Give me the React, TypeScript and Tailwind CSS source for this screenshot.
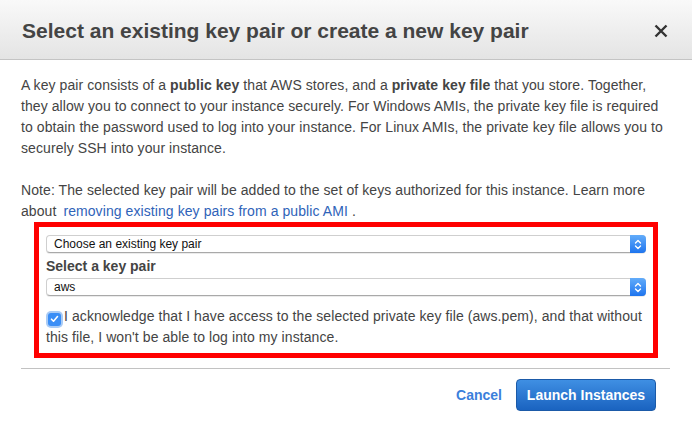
import React from "react";

function SelectBox({ label }: { label: string }) {
  return (
    <div className="flex h-[18px] items-stretch rounded-[4px] border border-[#cfcfcf] border-b-[#a9a9a9] bg-white shadow-[0_1px_0_rgba(0,0,0,0.08)]">
      <div className="flex flex-1 items-center pl-[7px] text-[12px] leading-none text-[#111]">{label}</div>
      <div className="-my-px -mr-px flex w-[16px] items-center justify-center rounded-r-[4px] bg-gradient-to-b from-[#62acfa] to-[#1d74ee]">
        <svg width="8" height="11" viewBox="0 0 8 11" fill="none" stroke="white" strokeWidth="1.4" strokeLinecap="round" strokeLinejoin="round">
          <path d="M1.5 4 L4 1.5 L6.5 4" />
          <path d="M1.5 7 L4 9.5 L6.5 7" />
        </svg>
      </div>
    </div>
  );
}

export default function App() {
  return (
    <div className="h-[426px] w-[692px] overflow-hidden bg-white font-['Liberation_Sans',Arial,sans-serif] text-[#444]">
      <div className="flex h-[60px] items-center justify-between border-b border-[#c4c4c4] bg-gradient-to-b from-[#f9f9f9] to-[#e4e4e4] pl-[22px] pr-[24px] pt-[3px]">
        <h1 className="text-[21px] font-bold text-[#444]">Select an existing key pair or create a new key pair</h1>
        <svg width="14" height="14" viewBox="0 0 14 14" stroke="#333" strokeWidth="2.4" strokeLinecap="butt">
          <path d="M1.5 1.5 L12.5 12.5 M12.5 1.5 L1.5 12.5" />
        </svg>
      </div>
      <div className="px-[21px] pt-[15px] text-[14px] leading-[21px] tracking-[0.08px]">
        <p>
          A key pair consists of a <b>public key</b> that AWS stores, and a <b>private key file</b> that you store. Together,
          <br />
          they allow you to connect to your instance securely. For Windows AMIs, the private key file is required to obtain the password used to log into your instance. For Linux AMIs, the private key file allows you to securely SSH into your instance.
        </p>
        <p className="mt-[21px]">
          Note: The selected key pair will be added to the set of keys authorized for this instance. Learn more about <a className="ml-[3px] text-[#2f63b9]">removing existing key pairs from a public AMI</a> .
        </p>
        <div className="mx-[13px] border-[5px] border-[#ff0000] px-[7px] pb-[5px] pt-[8px] tracking-normal">
          <SelectBox label="Choose an existing key pair" />
          <div className="mb-[2px] mt-[3px] text-[14px] font-bold leading-[20px] text-[#444]">Select a key pair</div>
          <SelectBox label="aws" />
          <p className="mt-[10px] text-[14px] leading-[21px] tracking-[0.08px]">
            <span className="relative top-[2px] ml-[2px] mr-[3px] inline-flex h-[13px] w-[13px] items-center justify-center rounded-[3px] bg-[#3a8ef6] ring-[2px] ring-[#a9cbf5]">
              <svg width="9" height="8" viewBox="0 0 9 8" fill="none" stroke="white" strokeWidth="1.6" strokeLinecap="round" strokeLinejoin="round">
                <path d="M1.5 4.2 L3.5 6.2 L7.5 1.5" />
              </svg>
            </span>
            I acknowledge that I have access to the selected private key file (aws.pem), and that without this file, I won't be able to log into my instance.
          </p>
        </div>
        <div className="mr-[1px] mt-[10px] border-t border-[#c2c2c2]" />
        <div className="mr-[15px] mt-[10px] flex items-center justify-end gap-[14px] tracking-normal">
          <span className="text-[14px] font-bold text-[#3b7fdb]">Cancel</span>
          <button className="h-[32px] w-[140px] rounded-[4px] border border-[#1b5aa8] bg-gradient-to-b from-[#3f8fe3] to-[#1a63c0] text-[14px] font-bold text-white">
            Launch Instances
          </button>
        </div>
      </div>
    </div>
  );
}
